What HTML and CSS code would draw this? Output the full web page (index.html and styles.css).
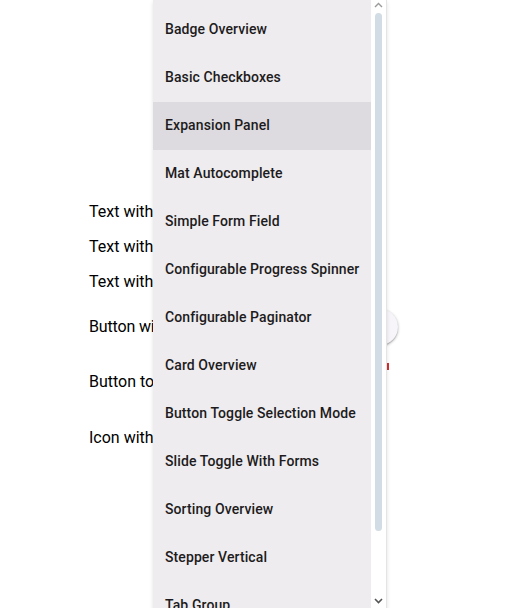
FILE: index.html
```html
<!DOCTYPE html>
<html>
<head>
<meta charset="utf-8">
<link rel="stylesheet" href="styles.css">
</head>
<body>
<main class="page">
  <div class="row text-row">Text with badge</div>
  <div class="row text-row">Text with a badge</div>
  <div class="row text-row">Text with a large badge</div>
  <div class="row btn-row first">Button with a badge on the left <span class="fab"></span></div>
  <div class="row btn-row">Button toggles badge visibility <span class="red-dot"></span></div>
  <div class="row btn-row">Icon with a badge</div>
</main>

<div class="menu">
  <div class="menu-list">
    <div class="item">Badge Overview</div>
    <div class="item">Basic Checkboxes</div>
    <div class="item active">Expansion Panel</div>
    <div class="item">Mat Autocomplete</div>
    <div class="item">Simple Form Field</div>
    <div class="item">Configurable Progress Spinner</div>
    <div class="item">Configurable Paginator</div>
    <div class="item">Card Overview</div>
    <div class="item">Button Toggle Selection Mode</div>
    <div class="item">Slide Toggle With Forms</div>
    <div class="item">Sorting Overview</div>
    <div class="item">Stepper Vertical</div>
    <div class="item">Tab Group</div>
  </div>
  <div class="scrollbar">
    <svg class="arrow" width="9" height="6" viewBox="0 0 9 6"><path d="M1 5 L4.5 1.5 L8 5" fill="none" stroke="#9a9a9a" stroke-width="1.4"/></svg>
    <div class="thumb"></div>
    <svg class="arrow" width="9" height="6" viewBox="0 0 9 6"><path d="M1 1 L4.5 4.5 L8 1" fill="none" stroke="#555" stroke-width="1.6"/></svg>
  </div>
</div>
</body>
</html>
```

FILE: styles.css
```css
html, body {
  margin: 0;
  padding: 0;
  background: #ffffff;
  height: 608px;
  overflow: hidden;
}

.page {
  padding: 194px 0 0 89px;
  font-family: Roboto, "Liberation Sans", sans-serif;
  font-size: 16px;
  color: #000;
}

.row {
  display: flex;
  align-items: center;
  white-space: nowrap;
  gap: 16px;
}

.text-row { height: 35px; }
.btn-row { height: 56px; }
.btn-row.first { height: 54px; letter-spacing: -0.15px; }

.fab {
  position: absolute;
  left: 362px;
  top: 309px;
  width: 36px;
  height: 36px;
  border-radius: 50%;
  background: #f7f5fa;
  box-shadow: 0 1px 3px rgba(0,0,0,0.3), 0 1px 1px rgba(0,0,0,0.15);
}

.red-dot {
  position: absolute;
  left: 384px;
  top: 363px;
  width: 5px;
  height: 7px;
  background: #d32f2f;
}

.menu {
  position: absolute;
  left: 153px;
  top: 0;
  width: 233px;
  height: 608px;
  display: flex;
  background: #ffffff;
  border-right: 1px solid #e4e4e4;
  box-shadow: 0 2px 4px rgba(0,0,0,0.12);
}

.menu-list {
  width: 218px;
  padding-top: 6px;
  background: #eeecef;
  overflow: hidden;
  font-family: Roboto, "Liberation Sans", sans-serif;
  font-weight: 500;
  font-size: 14px;
  letter-spacing: 0.1px;
  color: #1d1b20;
}

.item {
  height: 48px;
  display: flex;
  align-items: center;
  padding: 0 0 2px 12px;
  box-sizing: border-box;
  white-space: nowrap;
}

.item.active {
  background: #dddbdf;
}

.scrollbar {
  width: 15px;
  display: flex;
  flex-direction: column;
  align-items: center;
  padding: 2px 0 2px;
  box-sizing: border-box;
}

.arrow {
  display: block;
  flex: none;
}

.thumb {
  width: 7px;
  height: 518px;
  margin: 5px 0 0;
  border-radius: 4px;
  background: #d2dce5;
}

.scrollbar .arrow:last-child {
  margin-top: auto;
  margin-bottom: 2px;
}
```
